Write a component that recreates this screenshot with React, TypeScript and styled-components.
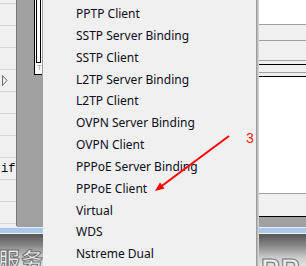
import React from "react";
import styled, { createGlobalStyle } from "styled-components";

const Global = createGlobalStyle`
  html, body { margin: 0; padding: 0; overflow: hidden; background: #f0f0f0; }
  #root { width: 306px; height: 266px; }
`;

const Root = styled.div`
  position: relative;
  width: 306px;
  height: 266px;
  display: flex;
  overflow: hidden;
  font-family: "Noto Sans", "Liberation Sans", sans-serif;
`;

const SideCol = styled.div<{ $w: number }>`
  width: ${(p) => p.$w}px;
  flex: none;
  display: flex;
  flex-direction: column;
  overflow: hidden;
`;

const TopArea = styled.div`
  height: 227px;
  flex: none;
  display: flex;
  overflow: hidden;
`;

const ListPanel = styled.div`
  width: 16px;
  flex: none;
  border-right: 1px solid #7a7a7a;
  background: #f0f0f0;
  overflow: hidden;
  height: 226px;
`;

const ListRows = styled.div`
  margin-top: -18px;
`;

const ListRow = styled.div`
  height: 21px;
  border-bottom: 1px solid #d7d7d7;
  display: flex;
  align-items: center;
  padding-left: 1px;
  font-family: "Liberation Mono", "DejaVu Sans Mono", monospace;
  font-size: 12px;
  color: #000;
  white-space: nowrap;
`;

const GreyColumn = styled.div`
  flex: 1;
  background: #a0a0a0;
  display: flex;
  justify-content: flex-end;
  align-items: flex-start;
  padding-right: 1px;
`;

const WindowFrame = styled.div`
  width: 6px;
  height: 75px;
  margin-top: -1px;
  background: #fff;
  border-left: 1px solid #000;
  border-bottom: 1px solid #000;
  padding-left: 1px;
  box-sizing: content-box;
  display: flex;
  flex-direction: column;
`;

const InnerBox = styled.div`
  height: 63px;
  width: 3px;
  border: 1px solid #000;
  border-top: none;
`;

const TinyLabel = styled.div`
  font-family: "Liberation Sans", sans-serif;
  font-size: 8px;
  line-height: 10px;
  color: #9a9a9a;
  padding-left: 1px;
`;

const BlueBar = styled.div`
  height: 5px;
  flex: none;
  border-top: 1px solid #e4ecf4;
  border-bottom: 1px solid #f6f6f6;
  background: #a9c8ea;
`;

const BannerStrip = styled.div`
  flex: 1;
  background: linear-gradient(#555555 0%, #858585 35%, #cdcdcd 75%, #e2e2e2 100%);
  overflow: hidden;
  position: relative;
`;

const BannerText = styled.div<{ $x: number; $top: number; $size: number }>`
  position: absolute;
  left: ${(p) => p.$x}px;
  top: ${(p) => p.$top}px;
  font-family: "Liberation Sans", "Noto Sans CJK SC", sans-serif;
  font-size: ${(p) => p.$size}px;
  font-weight: bold;
  line-height: 1;
  color: #eeeeee;
  -webkit-text-stroke: 1px #707070;
  white-space: nowrap;
  letter-spacing: 1px;
`;

const Menu = styled.div`
  width: 213px;
  flex: none;
  background: #f0f0f0;
  padding: 3px 0 0 33px;
  box-sizing: border-box;
  overflow: hidden;
`;

const MenuItem = styled.div`
  height: 21.85px;
  line-height: 21.85px;
  font-size: 12px;
  color: #0c0c20;
  white-space: nowrap;
`;

const MenuEdge = styled.div`
  width: 3px;
  flex: none;
  background: linear-gradient(to right, #8e8e8e, #b9b9b9, #dedede);
`;

const RightStack = styled.div`
  height: 227px;
  flex: none;
  display: flex;
  flex-direction: column;
  background: #fff;
`;

const Band = styled.div<{ $h: number; $bg: string; $line?: string }>`
  height: ${(p) => p.$h}px;
  flex: none;
  background: ${(p) => p.$bg};
  border-bottom: ${(p) => (p.$line ? `1px solid ${p.$line}` : "none")};
`;

const Overlay = styled.svg`
  position: absolute;
  left: 0;
  top: 0;
  pointer-events: none;
`;

const StepNumber = styled.span`
  position: absolute;
  left: 246px;
  top: 131px;
  font-family: "Liberation Sans", sans-serif;
  font-size: 14px;
  line-height: 14px;
  color: #ff1a1a;
`;

const items = [
  "PPTP Client",
  "SSTP Server Binding",
  "SSTP Client",
  "L2TP Server Binding",
  "L2TP Client",
  "OVPN Server Binding",
  "OVPN Client",
  "PPPoE Server Binding",
  "PPPoE Client",
  "Virtual",
  "WDS",
  "Nstreme Dual",
];

const RowArrow = () => (
  <svg width="7" height="11" viewBox="0 0 7 11">
    <path d="M1.5 0.5 V10.5 M1.5 0.5 L6 5.5 L1.5 10.5" fill="none" stroke="#6a6a6a" strokeWidth="1" />
  </svg>
);

export default function App() {
  const rows = Array.from({ length: 12 }, (_, i) => i);
  return (
    <>
      <Global />
      <Root>
        <SideCol $w={43}>
          <TopArea>
            <ListPanel>
              <ListRows>
                {rows.map((i) => (
                  <ListRow key={i}>
                    {i === 4 ? <RowArrow /> : i === 8 ? "if" : null}
                  </ListRow>
                ))}
              </ListRows>
            </ListPanel>
            <GreyColumn>
              <WindowFrame>
                <InnerBox />
                <TinyLabel>T</TinyLabel>
              </WindowFrame>
            </GreyColumn>
          </TopArea>
          <BlueBar />
          <BannerStrip>
            <BannerText $x={-2} $top={16} $size={22}>服务</BannerText>
          </BannerStrip>
        </SideCol>

        <Menu>
          {items.map((t) => (
            <MenuItem key={t}>{t}</MenuItem>
          ))}
        </Menu>
        <MenuEdge />

        <SideCol $w={47}>
          <RightStack>
            <Band $h={24} $bg="#ffffff" $line="#a0a0a0" />
            <Band $h={15} $bg="#f0f0f0" $line="#a0a0a0" />
            <Band $h={19} $bg="#f0f0f0" $line="#a0a0a0" />
            <Band $h={3} $bg="#f0f0f0" $line="#000000" />
            <Band $h={7} $bg="#f0f0f0" $line="#a0a0a0" />
            <Band $h={3} $bg="#f0f0f0" $line="#000000" />
            <Band $h={116} $bg="#ffffff" $line="#a0a0a0" />
            <Band $h={22} $bg="#f0f0f0" $line="#000000" />
            <Band $h={11} $bg="#a0a0a0" />
          </RightStack>
          <BlueBar />
          <BannerStrip>
            <BannerText $x={2} $top={21} $size={28}>PP</BannerText>
          </BannerStrip>
        </SideCol>

        <Overlay width="306" height="266" viewBox="0 0 306 266">
          <line x1="229" y1="136" x2="161" y2="186.5" stroke="#ff0000" strokeWidth="2" />
          <polygon points="155,191 164.5,188.6 160,182.6" fill="#ff0000" />
        </Overlay>
        <StepNumber>3</StepNumber>
      </Root>
    </>
  );
}
